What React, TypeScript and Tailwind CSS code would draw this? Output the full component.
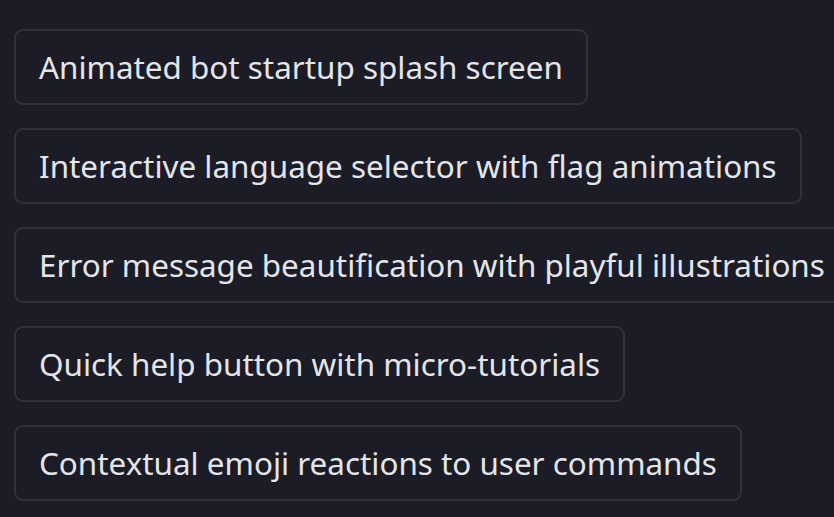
import React from "react";

const items = [
  "Animated bot startup splash screen",
  "Interactive language selector with flag animations",
  "Error message beautification with playful illustrations",
  "Quick help button with micro-tutorials",
  "Contextual emoji reactions to user commands",
];

export default function App() {
  return (
    <div className="w-[834px] h-[517px] overflow-hidden bg-[#1b1c26] pl-[14px] pt-[29px]">
      <div className="flex flex-col items-start gap-[23px]">
        {items.map((t) => (
          <div
            key={t}
            className="shrink-0 whitespace-nowrap rounded-[9px] border-2 border-[#2f313d] px-[23px] h-[76px] flex items-center text-[31.4px] text-[#e4e5ea] font-['Noto_Sans',sans-serif]"
          >
            {t}
          </div>
        ))}
      </div>
    </div>
  );
}
